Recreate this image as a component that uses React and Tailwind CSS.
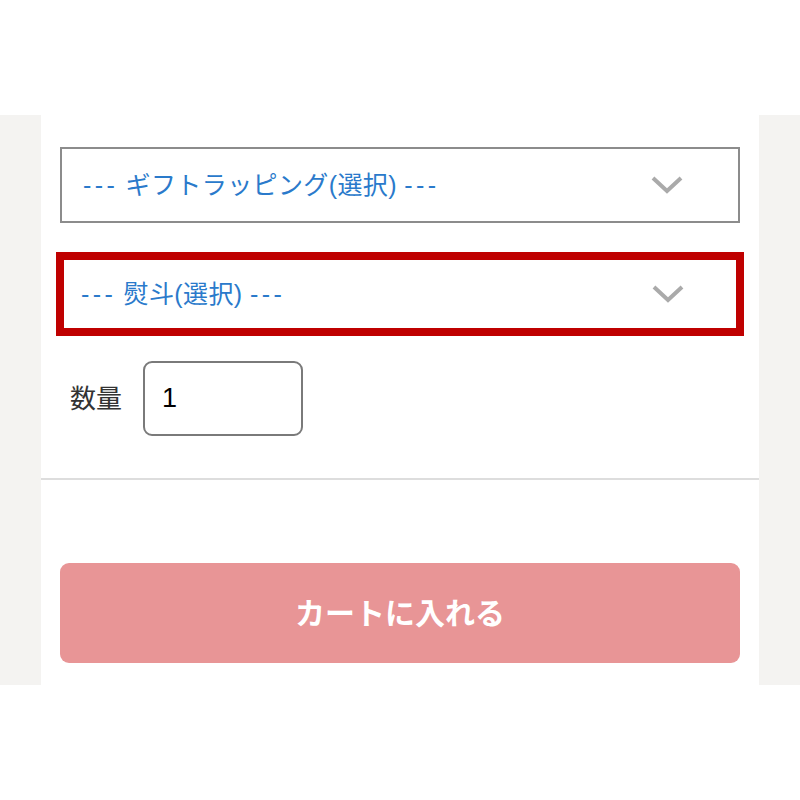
import React from "react"

function Chevron() {
  return (
    <svg width="32" height="20" viewBox="0 0 32 20" className="shrink-0">
      <path d="M2 3 L16 16 L30 3" fill="none" stroke="#aaaaaa" strokeWidth="4" />
    </svg>
  )
}

function Dashes() {
  return <span className="tracking-[3.4px]">---</span>
}

export default function App() {
  return (
    <div
      className="w-[800px] h-[800px] bg-white pt-[115px]"
      style={{ fontFamily: '"Liberation Sans", "Noto Sans CJK JP", sans-serif' }}
    >
      <div className="flex h-[570px] bg-[#f4f3f1]">
        <div className="w-[41px] shrink-0" />
        <div className="flex-1 bg-white flex flex-col">
          <div className="px-[19px] pt-[32px]">
            <div className="h-[76px] border-2 border-[#8c8c8c] flex items-center justify-between pl-[21px] pr-[55px]">
              <span className="text-[25px] text-[#2a7acb] leading-none tracking-[0.4px]">
                <Dashes /> ギフトラッピング(選択) <Dashes />
              </span>
              <Chevron />
            </div>
            <div className="mt-[29px] -mx-[4px] h-[84px] border-8 border-[#bf0000] flex items-center justify-between pl-[17px] pr-[52px]">
              <span className="text-[25px] text-[#2a7acb] leading-none tracking-[0.4px]">
                <Dashes /> 熨斗(選択) <Dashes />
              </span>
              <Chevron />
            </div>
            <div className="mt-[25px] flex items-center pl-[10px]">
              <span className="text-[26px] text-[#333333] leading-none">数量</span>
              <div className="ml-[21px] w-[160px] h-[75px] border-2 border-[#7a7a7a] rounded-[9px] flex items-center pl-[17px]">
                <span className="text-[27px] text-black leading-none">1</span>
              </div>
            </div>
          </div>
          <div className="mt-[42px] h-[2px] bg-[#dddddd]" />
          <div className="px-[19px] pt-[83px]">
            <button className="w-full h-[100px] rounded-[9px] bg-[#e89596] text-white text-[30px] font-bold">
              カートに入れる
            </button>
          </div>
        </div>
        <div className="w-[41px] shrink-0" />
      </div>
    </div>
  )
}
